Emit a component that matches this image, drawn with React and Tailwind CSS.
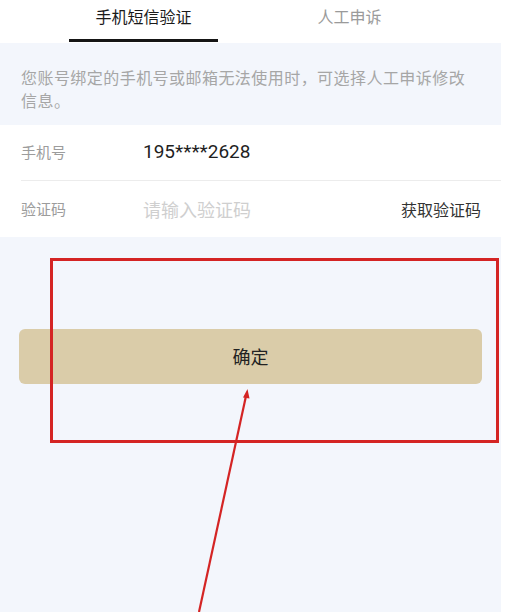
import React from 'react';

const FONT = '"Noto Sans CJK SC", "Noto Sans", sans-serif';

const App = () => {
  return (
    <div className="relative flex w-[506px] h-[612px] bg-white overflow-hidden" style={{ fontFamily: FONT }}>
      <div className="flex flex-col w-[501px] bg-[#f3f6fc]">
        {/* tabs */}
        <div className="flex h-[43px] bg-white pl-[69px]">
          <div className="relative flex w-[149px] flex-col items-center justify-start">
            <span className="mt-[4px] text-[16px] leading-[24px] text-[#1a1a1a]">手机短信验证</span>
            <div className="absolute bottom-[1px] left-0 h-[3px] w-full bg-[#151515]"></div>
          </div>
          <div className="ml-[57px] flex w-[149px] justify-center">
            <span className="mt-[4px] text-[16px] leading-[24px] text-[#9a9a9a]">人工申诉</span>
          </div>
        </div>

        {/* notice */}
        <div className="pl-[21px] pt-[23px] pb-[13px]">
          <p className="w-[455px] text-[16px] leading-[23px] tracking-[0.45px] text-[#a6a6a6]">
            您账号绑定的手机号或邮箱无法使用时，可选择人工申诉修改信息。
          </p>
        </div>

        {/* form */}
        <div className="bg-white pl-[21px]">
          <div className="flex h-[56px] items-center border-b border-[#ececec]">
            <span className="w-[122px] text-[15px] text-[#9c9c9c]">手机号</span>
            <span className="text-[19px] text-[#1f1f1f]" style={{ fontFamily: 'Roboto, "Noto Sans CJK SC", sans-serif' }}>
              195****2628
            </span>
          </div>
          <div className="flex h-[56px] items-center pr-[20px]">
            <span className="w-[122px] text-[15px] text-[#9c9c9c]">验证码</span>
            <span className="flex-1 text-[18px] text-[#cfcfcf]">请输入验证码</span>
            <span className="text-[16px] text-[#333333]">获取验证码</span>
          </div>
        </div>

        {/* confirm */}
        <div className="mt-[92px] px-[19px]">
          <button className="flex h-[55px] w-full items-center justify-center rounded-[6px] bg-[#dacca9] text-[18px] text-[#222222]">
            确定
          </button>
        </div>
      </div>

      {/* annotation overlay */}
      <div className="absolute left-[50px] top-[258px] h-[185px] w-[449px] border-[3px] border-[#d42424]"></div>
      <svg className="absolute left-0 top-0" width="506" height="612" viewBox="0 0 506 612">
        <line x1="199" y1="612" x2="246" y2="396" stroke="#d42424" strokeWidth="2.2" />
        <path d="M247.5 389 L243 397.5 L249.5 398.5 Z" fill="#d42424" />
      </svg>
    </div>
  );
};

export default App;
